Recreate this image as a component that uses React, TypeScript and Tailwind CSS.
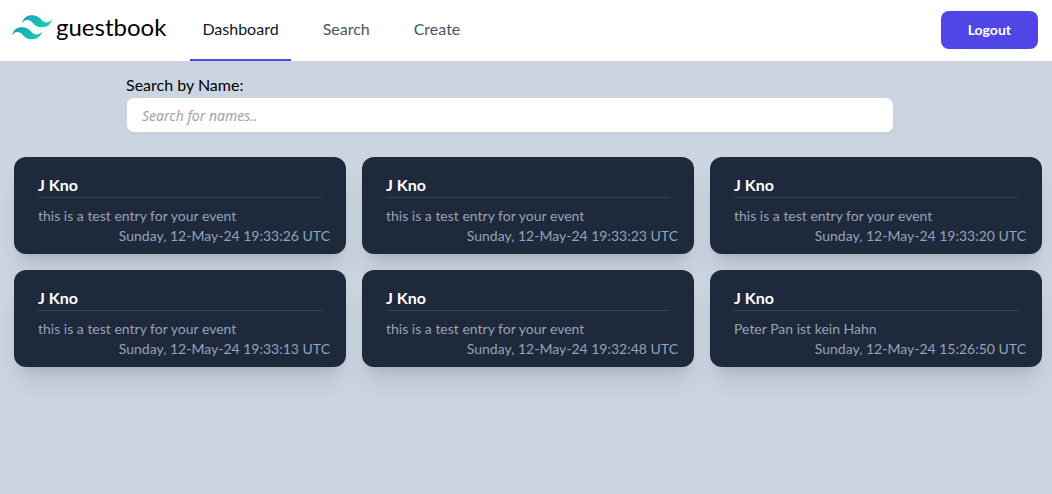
const entries = [
  { name: "J Kno", message: "this is a test entry for your event", date: "Sunday, 12-May-24 19:33:26 UTC" },
  { name: "J Kno", message: "this is a test entry for your event", date: "Sunday, 12-May-24 19:33:23 UTC" },
  { name: "J Kno", message: "this is a test entry for your event", date: "Sunday, 12-May-24 19:33:20 UTC" },
  { name: "J Kno", message: "this is a test entry for your event", date: "Sunday, 12-May-24 19:33:13 UTC" },
  { name: "J Kno", message: "this is a test entry for your event", date: "Sunday, 12-May-24 19:32:48 UTC" },
  { name: "J Kno", message: "Peter Pan ist kein Hahn", date: "Sunday, 12-May-24 15:26:50 UTC" },
];

type Entry = (typeof entries)[number];

function Logo() {
  return (
    <svg className="mt-0.5 h-[25px] w-10" viewBox="0 0 54 33" aria-hidden="true">
      <defs>
        <linearGradient id="wave" x1="-2.778%" y1="32%" x2="100%" y2="67.556%">
          <stop offset="0" stopColor="#2298BD" />
          <stop offset="1" stopColor="#0ED7B5" />
        </linearGradient>
      </defs>
      <path
        fill="url(#wave)"
        fillRule="evenodd"
        d="M27 0c-7.2 0-11.7 3.6-13.5 10.8 2.7-3.6 5.85-4.95 9.45-4.05 2.054.513 3.522 2.004 5.147 3.653C30.744 13.09 33.808 16.2 40.5 16.2c7.2 0 11.7-3.6 13.5-10.8-2.7 3.6-5.85 4.95-9.45 4.05-2.054-.513-3.522-2.004-5.147-3.653C36.756 3.11 33.692 0 27 0zM13.5 16.2C6.3 16.2 1.8 19.8 0 27c2.7-3.6 5.85-4.95 9.45-4.05 2.054.514 3.522 2.004 5.147 3.653C17.244 29.29 20.308 32.4 27 32.4c7.2 0 11.7-3.6 13.5-10.8-2.7 3.6-5.85 4.95-9.45 4.05-2.054-.513-3.522-2.004-5.147-3.653C23.256 19.31 20.192 16.2 13.5 16.2z"
      />
    </svg>
  );
}

function NavLink({ label, active = false }: { label: string; active?: boolean }) {
  return (
    <a
      href="#"
      aria-current={active ? "page" : undefined}
      className={
        active
          ? "flex items-center border-b-2 border-[#4f46e5] px-3 pb-0.5 text-[#0f172a]"
          : "flex items-center border-b-2 border-transparent px-3 pb-0.5 text-[#475569]"
      }
    >
      {label}
    </a>
  );
}

function Card({ entry }: { entry: Entry }) {
  return (
    <article className="rounded-xl bg-[#1e293b] pt-4 pr-4 pb-2 pl-6 shadow-xl">
      <h2 className="mr-2 border-b border-[#334155] font-bold text-white">{entry.name}</h2>
      <p className="mt-2 text-sm text-[#94a3b8]">{entry.message}</p>
      <p className="text-right text-sm text-[#94a3b8]">{entry.date}</p>
    </article>
  );
}

export default function App() {
  return (
    <div className="min-h-screen bg-[#cbd5e1] font-[Lato,'Noto_Sans',sans-serif] text-black">
      <header className="flex h-[61px] items-stretch bg-white pr-[14px] pl-3">
        <a href="#" className="flex items-center gap-1 pb-2 text-2xl">
          <Logo />
          guestbook
        </a>
        <nav className="ml-6 flex gap-5">
          <NavLink label="Dashboard" active />
          <NavLink label="Search" />
          <NavLink label="Create" />
        </nav>
        <button
          type="button"
          className="mb-3 ml-auto h-[38px] self-end rounded-lg bg-[#4f46e5] px-[27px] text-sm font-bold text-white"
        >
          Logout
        </button>
      </header>
      <main>
        <div className="pt-3 pr-8">
          <div className="mx-auto flex max-w-3xl flex-col">
            <label htmlFor="names">Search by Name:</label>
            <input
              id="names"
              type="text"
              placeholder="Search for names.."
              className="h-9 rounded-lg border border-[#cbd5e1] bg-white px-[15px] font-['Noto_Sans',sans-serif] text-sm shadow-xs placeholder:text-[#9ca3af] placeholder:italic"
            />
          </div>
        </div>
        <section className="mt-6 grid grid-cols-3 gap-4 pr-[10px] pb-8 pl-[14px]">
          {entries.map((entry) => (
            <Card key={entry.date} entry={entry} />
          ))}
        </section>
      </main>
    </div>
  );
}
